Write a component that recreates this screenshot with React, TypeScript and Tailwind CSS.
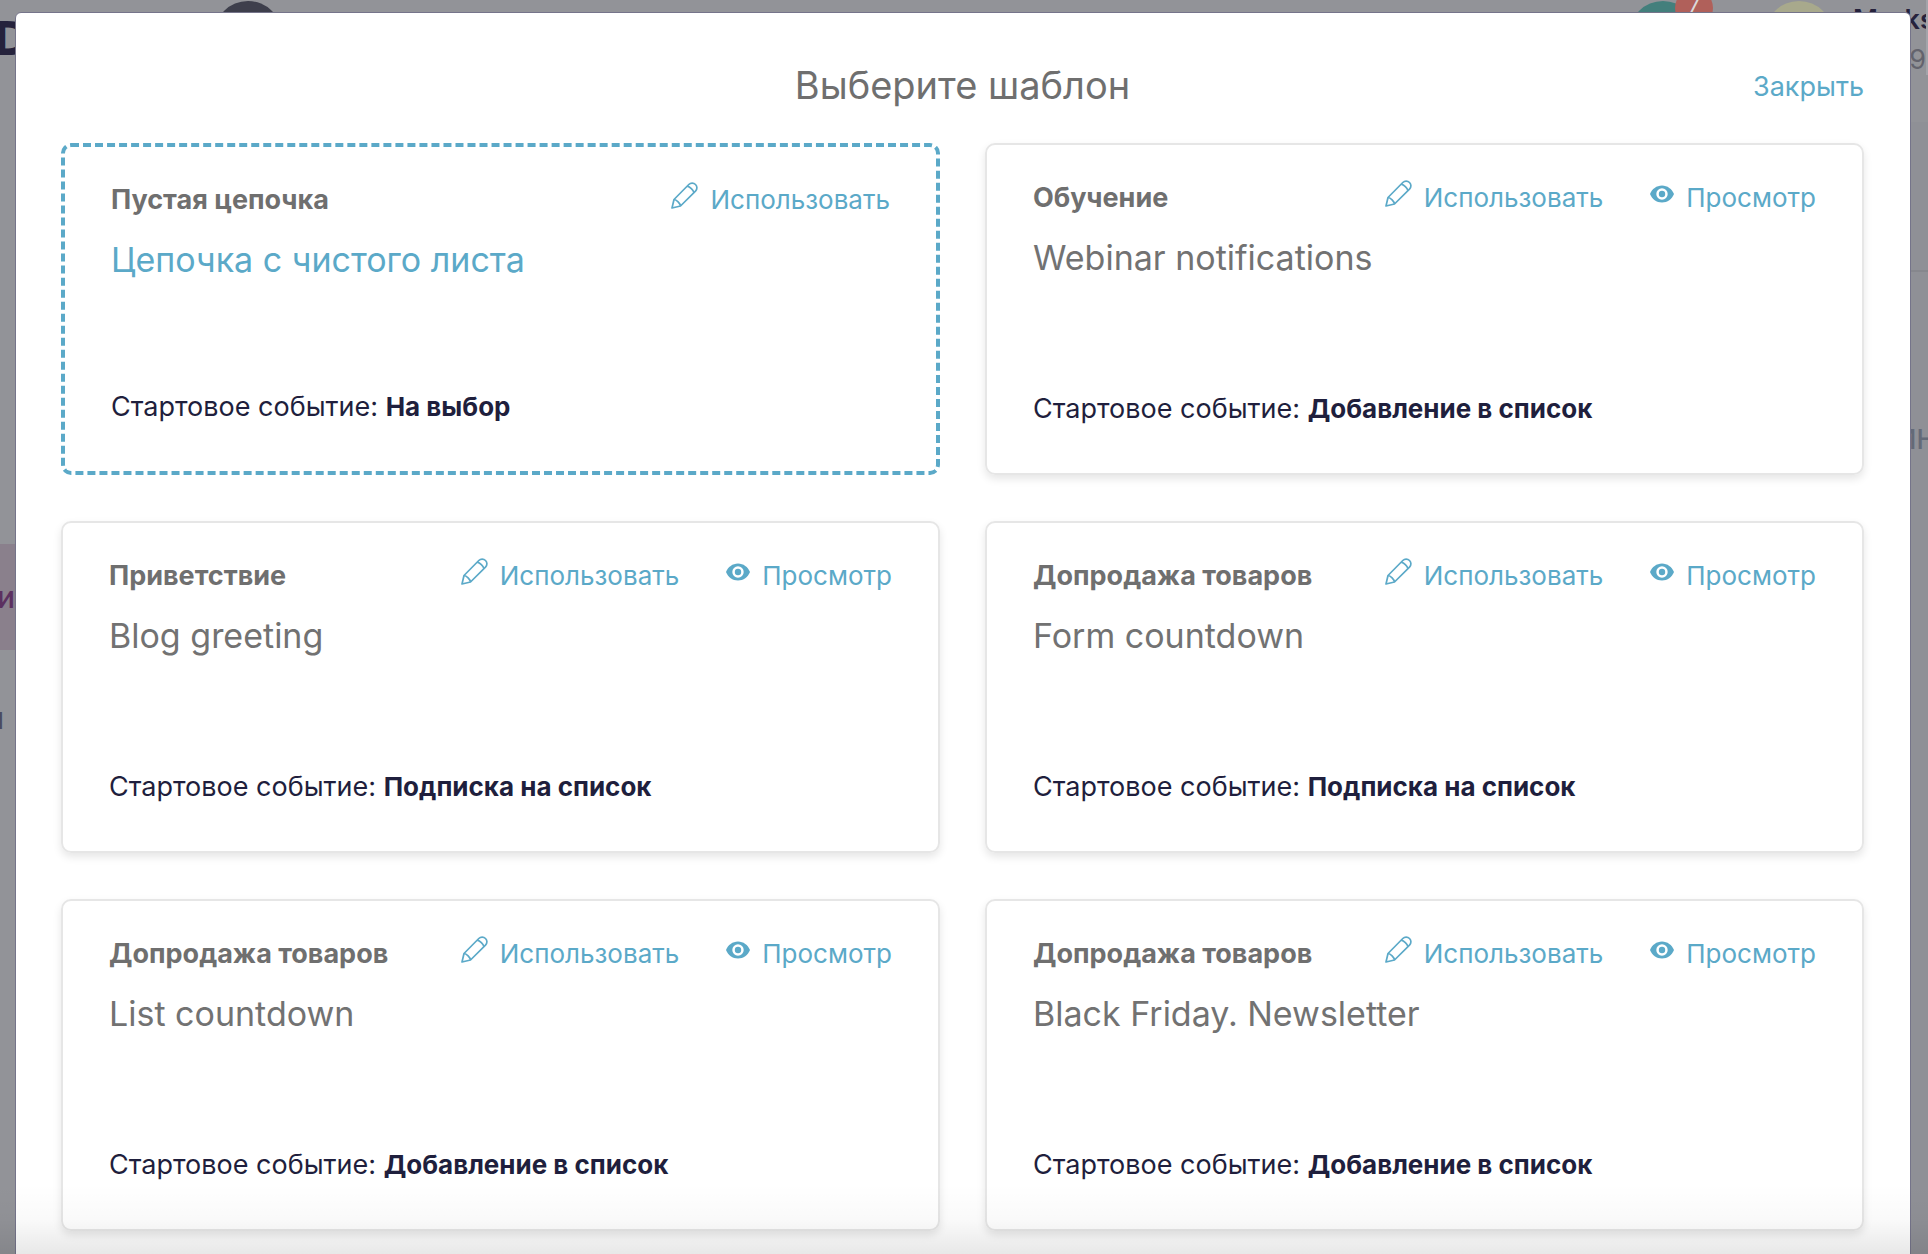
interface Template {
  category: string;
  title: string;
  event: string;
  blank?: boolean;
}

const templates: Template[] = [
  { category: "Пустая цепочка", title: "Цепочка с чистого листа", event: "На выбор", blank: true },
  { category: "Обучение", title: "Webinar notifications", event: "Добавление в список" },
  { category: "Приветствие", title: "Blog greeting", event: "Подписка на список" },
  { category: "Допродажа товаров", title: "Form countdown", event: "Подписка на список" },
  { category: "Допродажа товаров", title: "List countdown", event: "Добавление в список" },
  { category: "Допродажа товаров", title: "Black Friday. Newsletter", event: "Добавление в список" },
];

function PencilIcon() {
  return (
    <svg
      width="27"
      height="27"
      viewBox="0 0 27 27"
      fill="none"
      stroke="currentColor"
      strokeWidth="1.7"
      strokeLinejoin="round"
    >
      <path d="M1 26 3 17.500 17.800 2.500a4.700 4.700 0 0 1 6.700 0 4.700 4.700 0 0 1 0 6.700L9.500 24Z" />
      <path d="M3 17.500C5.500 17.700 9.300 21.500 9.500 24" />
      <path d="M16.200 4.100C19 4.900 22.200 8 23 10.700" />
    </svg>
  );
}

function EyeIcon() {
  return (
    <svg width="24" height="22" viewBox="0 0 24 22" fill="currentColor">
      <path
        fillRule="evenodd"
        d="M12 .5C6.6.5 2 4 0 9c2 5 6.6 8.500 12 8.500S22 14 24 9C22 4 17.400.5 12 .5Zm0 14.200a5.700 5.700 0 1 1 0-11.400 5.700 5.700 0 0 1 0 11.400Z"
      />
      <circle cx="12" cy="9" r="3.200" />
    </svg>
  );
}

function TemplateCard({ category, title, event, blank }: Template) {
  return (
    <article
      className={
        blank
          ? "flex min-h-[332px] flex-col rounded-[10px] border-4 border-dashed border-[#5ba9c8] px-[46px] pt-[33px] pb-11"
          : "flex min-h-[332px] flex-col rounded-[10px] border-2 border-[#e6e6e6] px-[46px] pt-[33px] pb-11 shadow-[0_4px_8px_rgba(0,0,0,0.1)]"
      }
    >
      <div className="flex items-baseline justify-between">
        <h2 className="font-bold text-[#6f6f6f]">{category}</h2>
        <div className="flex gap-[47px] text-[26px] text-[#5ba9c8]">
          <button type="button" className="flex items-baseline gap-3">
            <PencilIcon />
            Использовать
          </button>
          {!blank && (
            <button type="button" className="flex items-baseline gap-3">
              <EyeIcon />
              Просмотр
            </button>
          )}
        </div>
      </div>
      <p
        className={
          blank
            ? "mt-[14px] text-[34px] leading-[52px] text-[#5ba9c8]"
            : "mt-[14px] text-[34px] leading-[52px] text-[#727272]"
        }
      >
        {title}
      </p>
      <p className="mt-auto text-[#1f1f3d]">
        Стартовое событие: <strong className="text-[26px] font-bold">{event}</strong>
      </p>
    </article>
  );
}

/* The dimmed page that stays visible round the dialog */
function Backdrop() {
  return (
    <>
      <header className="flex h-[122px] items-start justify-between overflow-hidden">
        <div className="flex gap-[183px]">
          <span className="-ml-2 font-['DejaVu_Sans',sans-serif] text-[47px] leading-[78px] font-bold text-[#25223c]">
            D
          </span>
          <span className="mt-px size-[68px] rounded-full bg-[#3e3f4c]" />
        </div>
        <div className="flex">
          <span className="relative mt-px mr-[68px] size-[68px] rounded-full bg-[#437f7c]">
            <span className="absolute -top-3 left-[46px] size-[38px] rounded-full bg-[#b0605a] text-center text-[22px] leading-[32px] text-[#dadada]">
              7
            </span>
          </span>
          <span className="mt-px mr-5 size-[68px] rounded-full bg-[#a8a98c]" />
          <span className="h-[75px] w-[75px] overflow-hidden border-r-2 border-[#a3a4aa] text-[#63636d]">
            <b className="block font-semibold text-[#25223c]">Marks</b>
            <span className="block text-right">9</span>
          </span>
        </div>
      </header>
      <div className="flex h-[1132px] justify-between">
        <nav className="w-5 overflow-hidden pt-[422px] text-[30px]">
          <a href="#" className="-ml-1 block h-[106px] bg-[#8a808c] pt-[33px] pl-px font-medium text-[#5c3060]">
            и
          </a>
          <a href="#" className="-ml-[14px] block pt-12 font-medium text-[#4a4a60]">
            и
          </a>
        </nav>
        <div className="w-5 overflow-hidden bg-[#8f9096] pt-[148px]">
          <div className="border-t-2 border-[#86878d] pt-[148px] text-[#646a78]">
            <span className="-ml-3 block font-medium">ИН</span>
          </div>
        </div>
      </div>
    </>
  );
}

export default function App() {
  return (
    <div className="relative h-screen overflow-hidden bg-[#929398] font-['Inter',sans-serif] text-[27px] leading-[40px]">
      <Backdrop />
      <div className="absolute inset-0 pt-3 pr-[17px] pl-[15px]">
        <section
          role="dialog"
          aria-labelledby="dialog-title"
          className="rounded-t-md border border-[#75748a] bg-white pt-11 pr-[46px] pb-12 pl-[45px]"
        >
          <div className="grid grid-cols-[1fr_auto_1fr] items-center">
            <h1 id="dialog-title" className="col-start-2 text-[38px] leading-[56px] text-[#6f6f6f]">
              Выберите шаблон
            </h1>
            <button type="button" className="mt-1 justify-self-end text-[#5ba9c8]">
              Закрыть
            </button>
          </div>
          <div className="mt-[30px] grid grid-cols-2 gap-x-[45px] gap-y-[46px]">
            {templates.map((t) => (
              <TemplateCard key={t.title} {...t} />
            ))}
          </div>
        </section>
      </div>
      <div className="pointer-events-none absolute inset-x-0 bottom-0 h-[70px] bg-linear-to-b from-transparent via-black/2 to-black/9" />
    </div>
  );
}
